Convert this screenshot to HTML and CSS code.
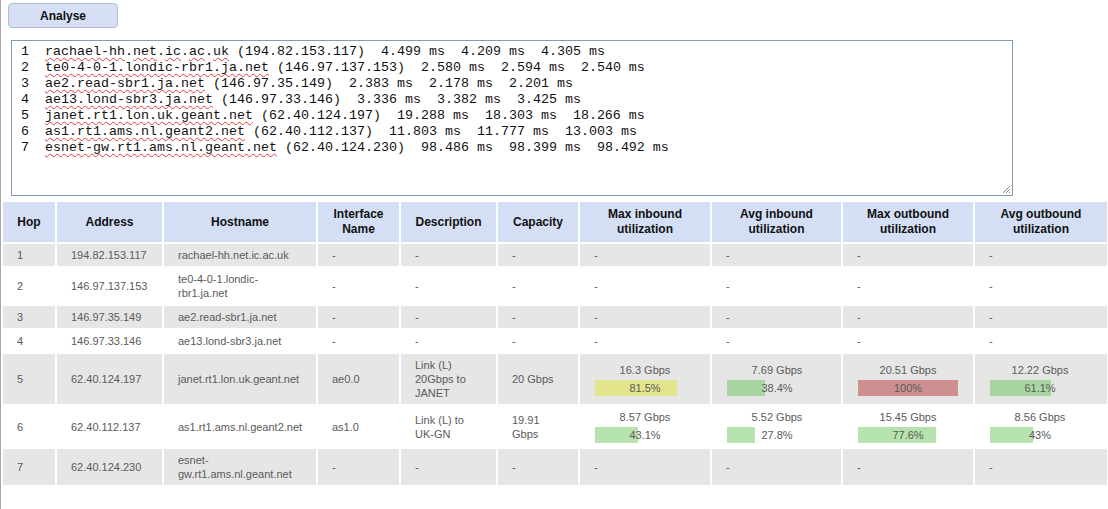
FILE: index.html
```
<!DOCTYPE html>
<html>
<head>
<meta charset="utf-8">
<link rel="stylesheet" href="styles.css">
</head>
<body>
<div class="page">
  <button class="btn" type="button">Analyse</button>
  <div class="trace">
    <div class="tl"> 1  <span class="sp">rachael-hh</span>.<span class="sp">net</span>.<span class="sp">ic</span>.<span class="sp">ac</span>.<span class="sp">uk</span> (194.82.153.117)  4.499 ms  4.209 ms  4.305 ms</div>
    <div class="tl"> 2  <span class="sp">te0-4-0-1.londic-rbr1.ja.net</span> (146.97.137.153)  2.580 ms  2.594 ms  2.540 ms</div>
    <div class="tl"> 3  <span class="sp">ae2.read-sbr1.ja.net</span> (146.97.35.149)  2.383 ms  2.178 ms  2.201 ms</div>
    <div class="tl"> 4  <span class="sp">ae13.lond-sbr3.ja.net</span> (146.97.33.146)  3.336 ms  3.382 ms  3.425 ms</div>
    <div class="tl"> 5  <span class="sp">janet.rt1.lon.uk.geant.net</span> (62.40.124.197)  19.288 ms  18.303 ms  18.266 ms</div>
    <div class="tl"> 6  <span class="sp">as1.rt1.ams.nl.geant2.net</span> (62.40.112.137)  11.803 ms  11.777 ms  13.003 ms</div>
    <div class="tl"> 7  <span class="sp">esnet-gw.rt1.ams.nl.geant.net</span> (62.40.124.230)  98.486 ms  98.399 ms  98.492 ms</div>
    <svg class="grip" width="10" height="10" viewBox="0 0 10 10"><path d="M9 2 L2 9 M9 5 L5 9 M9 8 L8 9" stroke="#8a8a8a" stroke-width="1" fill="none"/></svg>
  </div>
  <table class="hops">
    <colgroup>
      <col style="width:52px"><col style="width:105px"><col style="width:152px"><col style="width:81px"><col style="width:95px"><col style="width:80px"><col style="width:130px"><col style="width:129px"><col style="width:130px"><col style="width:132px">
    </colgroup>
    <thead>
      <tr>
        <th>Hop</th><th>Address</th><th>Hostname</th><th>Interface Name</th><th>Description</th><th>Capacity</th><th>Max inbound utilization</th><th>Avg inbound utilization</th><th>Max outbound utilization</th><th>Avg outbound utilization</th>
      </tr>
    </thead>
    <tbody>
      <tr class="odd"><td>1</td><td>194.82.153.117</td><td>rachael-hh.net.ic.ac.uk</td><td>-</td><td>-</td><td>-</td><td>-</td><td>-</td><td>-</td><td>-</td></tr>
      <tr class="even"><td>2</td><td>146.97.137.153</td><td>te0-4-0-1.londic-rbr1.ja.net</td><td>-</td><td>-</td><td>-</td><td>-</td><td>-</td><td>-</td><td>-</td></tr>
      <tr class="odd"><td>3</td><td>146.97.35.149</td><td>ae2.read-sbr1.ja.net</td><td>-</td><td>-</td><td>-</td><td>-</td><td>-</td><td>-</td><td>-</td></tr>
      <tr class="even"><td>4</td><td>146.97.33.146</td><td>ae13.lond-sbr3.ja.net</td><td>-</td><td>-</td><td>-</td><td>-</td><td>-</td><td>-</td><td>-</td></tr>
      <tr class="odd">
        <td>5</td><td>62.40.124.197</td><td>janet.rt1.lon.uk.geant.net</td><td>ae0.0</td><td>Link (L) 20Gbps to JANET</td><td>20 Gbps</td>
        <td><div class="util"><div class="rate">16.3 Gbps</div><div class="bar"><span class="fill yellow" style="width:81.5px"></span><span class="pct">81.5%</span></div></div></td>
        <td><div class="util"><div class="rate">7.69 Gbps</div><div class="bar"><span class="fill green" style="width:38.4px"></span><span class="pct">38.4%</span></div></div></td>
        <td><div class="util"><div class="rate">20.51 Gbps</div><div class="bar"><span class="fill red" style="width:100px"></span><span class="pct">100%</span></div></div></td>
        <td><div class="util"><div class="rate">12.22 Gbps</div><div class="bar"><span class="fill green" style="width:61.1px"></span><span class="pct">61.1%</span></div></div></td>
      </tr>
      <tr class="even">
        <td>6</td><td>62.40.112.137</td><td>as1.rt1.ams.nl.geant2.net</td><td>as1.0</td><td>Link (L) to UK-GN</td><td>19.91 Gbps</td>
        <td><div class="util"><div class="rate">8.57 Gbps</div><div class="bar"><span class="fill green" style="width:43.1px"></span><span class="pct">43.1%</span></div></div></td>
        <td><div class="util"><div class="rate">5.52 Gbps</div><div class="bar"><span class="fill green" style="width:27.8px"></span><span class="pct">27.8%</span></div></div></td>
        <td><div class="util"><div class="rate">15.45 Gbps</div><div class="bar"><span class="fill green" style="width:77.6px"></span><span class="pct">77.6%</span></div></div></td>
        <td><div class="util"><div class="rate">8.56 Gbps</div><div class="bar"><span class="fill green" style="width:43px"></span><span class="pct">43%</span></div></div></td>
      </tr>
      <tr class="odd"><td>7</td><td>62.40.124.230</td><td>esnet-gw.rt1.ams.nl.geant.net</td><td>-</td><td>-</td><td>-</td><td>-</td><td>-</td><td>-</td><td>-</td></tr>
    </tbody>
  </table>
</div>
</body>
</html>
```
FILE: styles.css
```
html, body {
  margin: 0;
  padding: 0;
  background: #fff;
}
body {
  font-family: "Liberation Sans", Arial, sans-serif;
  color: #5a5a5a;
}
.page {
  border-left: 1px solid #a8a8a8;
  min-height: 509px;
  box-sizing: border-box;
  padding-top: 3px;
}
.btn {
  display: block;
  margin: 0 0 0 7px;
  width: 110px;
  height: 25px;
  border: 1px solid #b3bccc;
  border-radius: 4px;
  background: #d6dff5;
  font-family: "Liberation Sans", Arial, sans-serif;
  font-size: 12px;
  font-weight: bold;
  color: #111;
  padding: 0;
}
.trace {
  position: relative;
  margin: 12px 0 0 10px;
  width: 1002px;
  height: 156px;
  box-sizing: border-box;
  border: 1px solid #7f9db9;
  padding: 3px 0 0 1px;
  font-family: "Liberation Mono", "Courier New", monospace;
  font-size: 13.333px;
  line-height: 16px;
  color: #111;
}
.tl {
  height: 16px;
  white-space: pre;
}
.sp {
  text-decoration: underline wavy #e04040;
  text-decoration-thickness: 1px;
  text-underline-offset: 2px;
  text-decoration-skip-ink: none;
}
.grip {
  position: absolute;
  right: 1px;
  bottom: 1px;
}
.hops {
  margin-top: 4px;
  border-collapse: separate;
  border-spacing: 2px;
  table-layout: fixed;
  width: 1106px;
  font-size: 11px;
}
.hops th {
  background: #d4dff5;
  color: #111;
  font-size: 12px;
  font-weight: bold;
  line-height: 15px;
  padding: 5px 8px;
  height: 28px;
  text-align: center;
  vertical-align: middle;
}
.hops td {
  padding: 4px 11px 4px 14px;
  line-height: 14px;
  height: 14px;
  vertical-align: middle;
  text-align: left;
  color: #5a5a5a;
}
.hops tr.odd td {
  background: #e6e6e6;
}
.hops tr.even td {
  background: #fff;
}
.util {
  width: 100px;
  margin-left: 1px;
}
.rate {
  text-align: center;
  line-height: 15px;
}
.bar {
  position: relative;
  height: 16px;
  margin-top: 2px;
  text-align: center;
  line-height: 16px;
}
.fill {
  position: absolute;
  left: 0;
  top: 0;
  height: 16px;
}
.pct {
  position: relative;
}
.fill.green {
  background: #b6e2ad;
}
.odd .fill.green {
  background: #a9d6a0;
}
.fill.yellow {
  background: #e4e48c;
}
.fill.red {
  background: #cd8f8f;
}
```
